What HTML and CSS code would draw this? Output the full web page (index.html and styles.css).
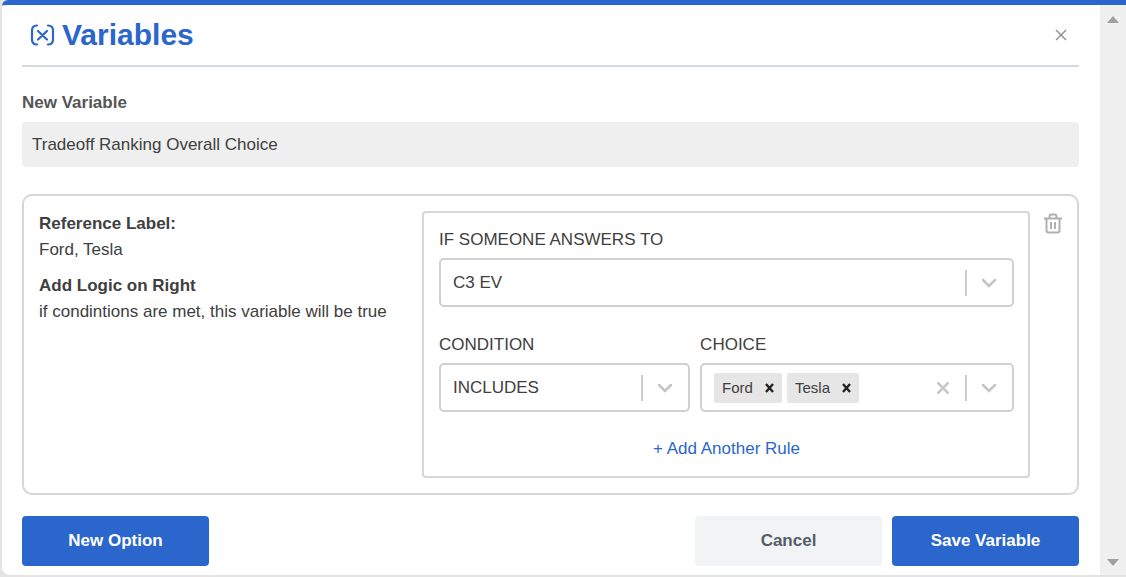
FILE: index.html
```html
<!DOCTYPE html>
<html lang="en">
<head>
    <meta charset="UTF-8">
    <meta name="viewport" content="width=device-width, initial-scale=1.0">
    <title>Variables</title>
    <link rel="stylesheet" href="styles.css">
</head>
<body>
    <div class="modal">
        <form class="modal-body">
            <header class="modal-header">
                <svg class="title-icon" viewBox="0 0 25 22" fill="none" stroke="currentColor" stroke-width="2.200" stroke-linecap="round">
                    <path d="M7 1.500C3.500 1.500 2 3.500 2 6.500v9c0 3 1.500 5 5 5M18 1.500c3.500 0 5 2 5 5v9c0 3-1.500 5-5 5M8 7l9 8.500M17 7l-9 8.500"/>
                </svg>
                <h1>Variables</h1>
                <button type="button" class="icon-button close" aria-label="Close">
                    <svg width="12" height="12" viewBox="0 0 12 12" fill="none" stroke="currentColor" stroke-width="1.4"><path d="M1 1l10 10M11 1L1 11"/></svg>
                </button>
            </header>

            <label class="name-label" for="variableName">New Variable</label>
            <input class="name-input" id="variableName" type="text" value="Tradeoff Ranking Overall Choice">

            <section class="option-card">
                <div class="option-info">
                    <h2>Reference Label:</h2>
                    <p>Ford, Tesla</p>
                    <h2>Add Logic on Right</h2>
                    <p>if condintions are met, this variable will be true</p>
                </div>
                <div class="rule-box">
                    <div class="field">
                        <label for="question">IF SOMEONE ANSWERS TO</label>
                        <div class="control">
                            <select id="question"><option>C3 EV</option></select>
                            <span class="separator"></span>
                            <svg class="chevron" viewBox="0 0 16 10"><path d="M2 2l6 6 6-6"/></svg>
                        </div>
                    </div>
                    <div class="rule-row">
                        <div class="field">
                            <label for="condition">CONDITION</label>
                            <div class="control">
                                <select id="condition"><option>INCLUDES</option></select>
                                <span class="separator"></span>
                                <svg class="chevron" viewBox="0 0 16 10"><path d="M2 2l6 6 6-6"/></svg>
                            </div>
                        </div>
                        <div class="field">
                            <label for="choice">CHOICE</label>
                            <div class="control">
                                <span class="chip">Ford
                                    <button type="button" aria-label="Remove Ford"><svg width="9" height="10" viewBox="0 0 9 10"><path d="M1 1l7 8M8 1L1 9"/></svg></button>
                                </span>
                                <span class="chip">Tesla
                                    <button type="button" aria-label="Remove Tesla"><svg width="9" height="10" viewBox="0 0 9 10"><path d="M1 1l7 8M8 1L1 9"/></svg></button>
                                </span>
                                <input class="choice-input" id="choice" type="text">
                                <button type="button" class="icon-button clear" aria-label="Clear choices">
                                    <svg width="14" height="14" viewBox="0 0 14 14" fill="none" stroke="currentColor" stroke-width="2.5"><path d="M1.500 1.500l11 11M12.500 1.500l-11 11"/></svg>
                                </button>
                                <span class="separator"></span>
                                <svg class="chevron" viewBox="0 0 16 10"><path d="M2 2l6 6 6-6"/></svg>
                            </div>
                        </div>
                    </div>
                    <button type="button" class="add-rule">+ Add Another Rule</button>
                </div>
                <button type="button" class="icon-button delete" aria-label="Delete option">
                    <svg width="18" height="21" viewBox="0 0 18 21" fill="none" stroke="currentColor" stroke-width="2">
                        <path d="M0 5.500h18M5.500 5V3.500c0-1 .8-2 2-2h3c1.200 0 2 1 2 2V5M2.500 6v11.500c0 1.200.8 2 2 2h9c1.200 0 2-.8 2-2V6"/>
                        <path d="M7 9v7M11 9v7"/>
                    </svg>
                </button>
            </section>

            <footer class="actions">
                <button type="button" class="button primary">New Option</button>
                <span class="spacer"></span>
                <button type="button" class="button secondary">Cancel</button>
                <button type="submit" class="button primary">Save Variable</button>
            </footer>
        </form>
        <div class="scrollbar">
            <span class="arrow up"></span>
            <span class="arrow down"></span>
        </div>
    </div>
</body>
</html>
```
FILE: styles.css
```css
* {
    box-sizing: border-box;
}
body {
    margin: 0;
    background: #e4e4e4;
    font-family: "Liberation Sans", Arial, sans-serif;
    font-size: 17px;
    line-height: 24px;
    color: #404040;
}
button, input, select {
    font: inherit;
    color: inherit;
}
button {
    padding: 0;
    border: none;
    background: none;
    cursor: pointer;
}
svg {
    display: block;
    flex: none;
}
h1, h2, p {
    margin: 0;
}
.modal {
    display: flex;
    min-height: 575px;
    margin-left: 2px;
    border-top: 5px solid #2b66cc;
    border-radius: 6px 0 0 8px;
    background: #fff;
    overflow: hidden;
}
.modal-body {
    flex: 1;
    min-width: 0;
    padding: 0 21px 9px 20px;
}
.modal-header {
    display: flex;
    align-items: center;
    height: 62px;
    padding: 0 12px 0 8px;
    border-bottom: 2px solid #d5d9e0;
    color: #2b66cc;
}
.modal-header h1 {
    flex: 1;
    margin-left: 7px;
    font-size: 30px;
    line-height: 36px;
}
.title-icon {
    width: 25px;
    height: 22px;
}
.icon-button {
    display: flex;
    color: #b0b0b0;
}
.close {
    color: #8c8c8c;
}
.name-label {
    display: block;
    margin: 24px 0 7px;
    font-weight: bold;
    color: #555;
}
.name-input {
    display: block;
    width: 100%;
    height: 45px;
    padding: 0 10px;
    border: none;
    border-radius: 4px;
    background: #efefef;
}
.option-card {
    display: flex;
    align-items: flex-start;
    margin-top: 27px;
    padding: 15px;
    border: 2px solid #d6d6d6;
    border-radius: 10px;
}
.option-info {
    flex: none;
    width: 383px;
}
.option-info h2,
.option-info p {
    font-size: 17px;
    line-height: 26px;
}
.option-info p + h2 {
    margin-top: 10px;
}
.rule-box {
    flex: 1;
    min-width: 0;
    padding: 15px 14px 15px 15px;
    border: 2px solid #d6d6d6;
    border-radius: 4px;
}
.field {
    min-width: 0;
}
.field label {
    display: block;
    margin-bottom: 6px;
}
.control {
    display: flex;
    align-items: center;
    height: 49px;
    padding: 0 15px 0 12px;
    border: 2px solid #d0d0d0;
    border-radius: 5px;
}
.control select {
    flex: 1;
    min-width: 0;
    padding: 0;
    border: none;
    background: none;
    appearance: none;
}
.separator {
    width: 2px;
    height: 26px;
    margin-right: 14px;
    background: #ccc;
}
.chevron {
    width: 16px;
    height: 10px;
    fill: none;
    stroke: #c4c4c4;
    stroke-width: 2.5;
    stroke-linecap: round;
}
.rule-row {
    display: grid;
    grid-template-columns: 4fr 5fr;
    gap: 10px;
    margin-top: 26px;
}
.chip {
    display: flex;
    align-items: center;
    gap: 12px;
    height: 30px;
    margin-right: 5px;
    padding: 0 8px;
    border-radius: 2px;
    background: #e6e6e6;
    font-size: 15px;
}
.chip path {
    fill: none;
    stroke: #222;
    stroke-width: 2.4;
}
.choice-input {
    flex: 1;
    min-width: 0;
    padding: 0;
    border: none;
    background: none;
}
.clear {
    margin-right: 15px;
    color: #c8c8c8;
}
.add-rule {
    display: block;
    margin: 25px auto 0;
    color: #2b66cc;
}
.delete {
    margin: 2px 0 0 14px;
}
.actions {
    display: flex;
    gap: 10px;
    margin-top: 21px;
}
.spacer {
    flex: 1;
}
.button {
    width: 187px;
    height: 50px;
    border-radius: 4px;
    font-weight: bold;
}
.primary {
    background: #2b66cc;
    color: #fff;
}
.secondary {
    background: #f2f3f5;
    color: #555d6b;
}
.scrollbar {
    display: flex;
    flex: none;
    flex-direction: column;
    justify-content: space-between;
    align-items: center;
    width: 26px;
    padding: 11px 0 9px;
    background: #f0f0f0;
}
.arrow {
    border: 6px solid transparent;
}
.up {
    border-top: none;
    border-bottom: 7px solid #a0a0a0;
}
.down {
    border-bottom: none;
    border-top: 7px solid #a0a0a0;
}
```
